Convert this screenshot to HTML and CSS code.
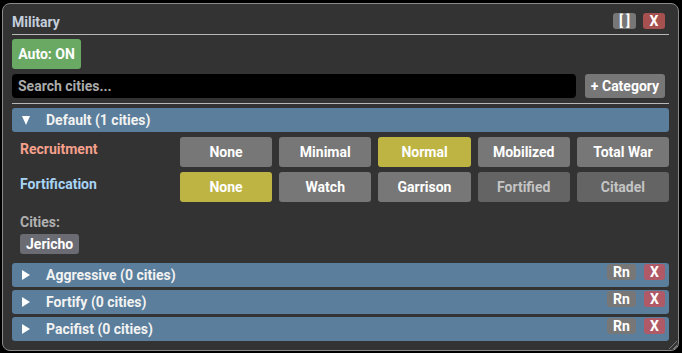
FILE: index.html
```html
<!DOCTYPE html>
<html lang="en">
<head>
  <meta charset="UTF-8" />
  <title>Military</title>
  <link rel="stylesheet" href="styles.css">
</head>
<body>
  <div class="window">
    <div class="title-bar">
      <span class="title">Military</span>
      <div class="title-actions">
        <button class="btn-small btn-grey">[ ]</button>
        <button class="btn-small btn-close">X</button>
      </div>
    </div>
    <div class="divider"></div>
    <button class="auto-btn">Auto: ON</button>
    <div class="search-row">
      <input class="search" type="text" placeholder="Search cities..." />
      <button class="add-btn">+ Category</button>
    </div>
    <div class="divider"></div>

    <div class="category">
      <div class="cat-header">
        <span class="arrow down"></span>
        <span class="cat-name">Default (1 cities)</span>
      </div>
      <div class="cat-body">
        <div class="policy-row">
          <span class="policy-label recruit">Recruitment</span>
          <div class="options">
            <button class="opt">None</button>
            <button class="opt">Minimal</button>
            <button class="opt active">Normal</button>
            <button class="opt">Mobilized</button>
            <button class="opt">Total War</button>
          </div>
        </div>
        <div class="policy-row">
          <span class="policy-label fort">Fortification</span>
          <div class="options">
            <button class="opt active">None</button>
            <button class="opt">Watch</button>
            <button class="opt">Garrison</button>
            <button class="opt locked">Fortified</button>
            <button class="opt locked">Citadel</button>
          </div>
        </div>
        <div class="cities-label">Cities:</div>
        <div class="city-list">
          <span class="city-tag">Jericho</span>
        </div>
      </div>
    </div>

    <div class="category">
      <div class="cat-header">
        <span class="arrow right"></span>
        <span class="cat-name">Aggressive (0 cities)</span>
        <button class="btn-small btn-grey">Rn</button>
        <button class="btn-small btn-del">X</button>
      </div>
    </div>
    <div class="category">
      <div class="cat-header">
        <span class="arrow right"></span>
        <span class="cat-name">Fortify (0 cities)</span>
        <button class="btn-small btn-grey">Rn</button>
        <button class="btn-small btn-del">X</button>
      </div>
    </div>
    <div class="category">
      <div class="cat-header">
        <span class="arrow right"></span>
        <span class="cat-name">Pacifist (0 cities)</span>
        <button class="btn-small btn-grey">Rn</button>
        <button class="btn-small btn-del">X</button>
      </div>
    </div>

    <div class="grip"></div>
  </div>
</body>
</html>
```

FILE: styles.css
```css
body {
  margin: 0;
  background: #000;
  font-family: Roboto, 'Liberation Sans', sans-serif;
  font-size: 14px;
  font-weight: bold;
  color: #fff;
}

button {
  font-family: inherit;
  font-weight: bold;
  border: none;
  color: #fff;
  cursor: pointer;
  padding: 0;
}

.window {
  position: relative;
  margin: 3px 0 0 2px;
  width: 677px;
  height: 348px;
  box-sizing: border-box;
  background: #333;
  border: 1px solid #8a8a8a;
  border-radius: 8px;
  padding: 9px 9px 0 9px;
}

.title-bar {
  display: flex;
  align-items: center;
  justify-content: space-between;
  height: 16px;
}

.title {
  color: #c4cedc;
  font-size: 14px;
  padding-top: 2px;
}

.title-actions {
  display: flex;
  gap: 7px;
  margin-right: 4px;
}

.btn-small {
  height: 16px;
  border-radius: 3px;
  font-size: 14px;
  line-height: 16px;
}

.btn-grey {
  background: #777;
  width: 23px;
}

.btn-close {
  background: #a65050;
  width: 22px;
}

.divider {
  height: 1px;
  background: #b8b8b8;
  margin-top: 5px;
}

.auto-btn {
  display: block;
  margin-top: 4px;
  width: 69px;
  height: 30px;
  background: #6aa964;
  border-radius: 3px;
  font-size: 14px;
}

.search-row {
  display: flex;
  gap: 9px;
  margin-top: 5px;
  padding-right: 4px;
}

.search {
  flex: 1;
  height: 24px;
  box-sizing: border-box;
  background: #000;
  border: none;
  border-radius: 4px;
  padding: 0 6px;
  color: #ddd;
  font-family: inherit;
  font-weight: bold;
  font-size: 14px;
}

.search::placeholder {
  color: #aaa;
}

.add-btn {
  width: 80px;
  height: 24px;
  background: #777;
  border-radius: 3px;
  font-size: 14px;
}

.category {
  margin-top: 3px;
}

.divider + .category {
  margin-top: 4px;
}

.cat-header {
  display: flex;
  align-items: center;
  height: 24px;
  background: #5a7e9b;
  border-radius: 3px;
  padding: 0 4px 0 10px;
}

.arrow {
  width: 0;
  height: 0;
  border-style: solid;
  border-color: transparent;
}

.arrow.down {
  border-width: 9px 4.5px 0 4.5px;
  border-top-color: #fff;
  margin-right: 16px;
}

.arrow.right {
  border-width: 5px 0 5px 8px;
  border-left-color: #fff;
  margin-right: 16px;
}

.cat-name {
  flex: 1;
  color: #f2f2f2;
}

.cat-header .btn-small {
  align-self: flex-start;
  margin-top: 1px;
}

.cat-header .btn-grey {
  width: 29px;
  margin-right: 8px;
}

.btn-del {
  background: #b05a68;
  width: 21px;
}

.cat-body {
  padding: 5px 0 6px 8px;
}

.policy-row {
  display: flex;
  align-items: center;
  margin-bottom: 5px;
}

.policy-label {
  width: 160px;
  margin-top: -7px;
}

.recruit { color: #f4a08c; }
.fort { color: #a8d4f4; }

.options {
  flex: 1;
  display: grid;
  grid-template-columns: repeat(5, 1fr);
  gap: 7px;
}

.opt {
  height: 30px;
  background: #777;
  border-radius: 3px;
  font-size: 14px;
}

.opt.active {
  background: #bdb443;
}

.opt.locked {
  background: #646464;
  color: #c4c4c4;
}

.cities-label {
  color: #b0b0b0;
  margin-top: 12px;
}

.city-list {
  margin-top: 4px;
}

.city-tag {
  display: inline-block;
  background: #6b6b73;
  border-radius: 3px;
  height: 20px;
  line-height: 20px;
  padding: 0 6px;
}

.grip {
  position: absolute;
  right: 1px;
  bottom: 1px;
  width: 8px;
  height: 8px;
  background: linear-gradient(135deg, transparent 45%, #777 45%, #777 55%, transparent 55%, transparent 75%, #777 75%, #777 85%, transparent 85%);
}
```
